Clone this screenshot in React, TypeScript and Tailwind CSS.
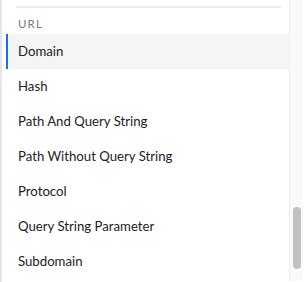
import React from "react";

const items = [
  "Domain",
  "Hash",
  "Path And Query String",
  "Path Without Query String",
  "Protocol",
  "Query String Parameter",
  "Subdomain",
];

export default function App() {
  return (
    <div
      className="relative w-[304px] h-[282px] bg-white overflow-hidden"
      style={{ fontFamily: 'Lato, "Noto Sans", sans-serif' }}
    >
      <div className="absolute left-0 top-0 bottom-0 w-[2px] bg-[#e6e6e6]" />
      <div className="flex h-full">
        <div className="flex-1 flex flex-col pl-[6px]">
          <div className="ml-[10px] mr-[8px] mt-[6px] h-[2px] bg-[#eeeeee]" />
          <div className="h-[26px] flex items-end pl-[12px] pb-[2px] text-[11.5px] tracking-[0.1em] text-[#7a7a7a]">
            URL
          </div>
          {items.map((t, i) => (
            <div
              key={t}
              className={
                i === 0
                  ? "h-[35px] flex items-center pt-[1px] pl-[10px] text-[13.2px] text-[#222222] bg-[#f5f5f5] border-l-[2px] border-[#1473e6]"
                  : "h-[35px] flex items-center pt-[1px] pl-[12px] text-[13.2px] text-[#222222]"
              }
            >
              {t}
            </div>
          ))}
        </div>
        <div className="w-[14px] mr-[1px] h-[281px] bg-[#fafafa] border-l border-[#efefef] relative">
          <div className="absolute left-[3px] top-[207px] w-[8px] h-[62px] rounded-full bg-[#c2c2c2]" />
        </div>
      </div>
    </div>
  );
}
